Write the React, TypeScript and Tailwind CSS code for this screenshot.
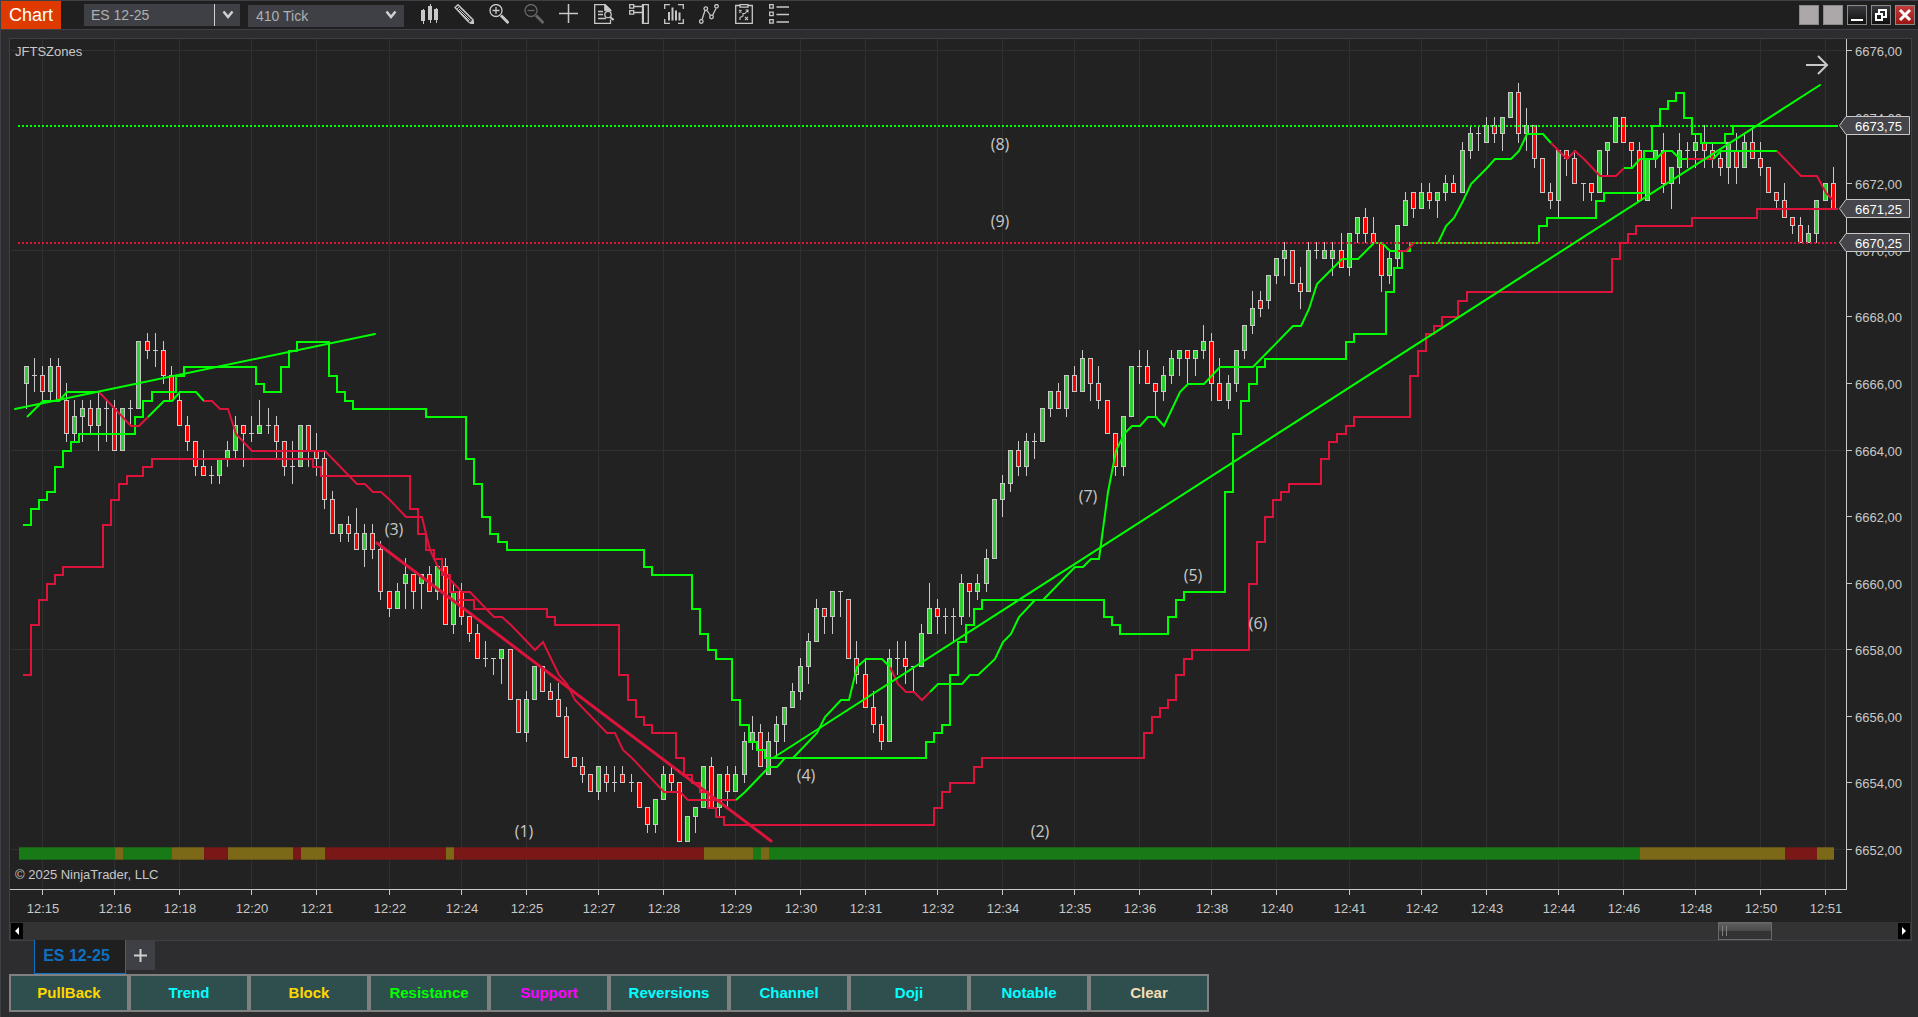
import type { ReactNode } from 'react'

// All chart levels are counted in ticks (0.25) below this price.
const TOP_PRICE = 6676

type Candle = [high: number, top: number, bottom: number, low: number, up: 0 | 1]
type Point = [bar: number, level: number]

const candles: Candle[] = [
  [38, 38, 40, 43, 1], [37, 39, 39, 41, 1], [38, 39, 41, 42, 0], [37, 38, 41, 42, 1], [37, 38, 42, 42, 0],
  [40, 42, 46, 47, 0], [42, 44, 46, 47, 1], [42, 43, 44, 47, 1], [42, 43, 45, 46, 0], [41, 43, 45, 48, 1],
  [42, 43, 43, 47, 1], [42, 43, 48, 48, 0], [43, 43, 48, 48, 1], [42, 43, 43, 45, 1], [35, 35, 43, 43, 1],
  [34, 35, 36, 37, 0], [34, 36, 36, 38, 1], [35, 36, 39, 40, 0], [38, 39, 42, 42, 0], [41, 42, 45, 45, 0],
  [44, 45, 47, 48, 0], [47, 47, 50, 51, 0], [48, 50, 51, 51, 0], [50, 51, 51, 52, 1], [49, 49, 51, 52, 1],
  [47, 48, 49, 50, 1], [44, 45, 48, 49, 1], [45, 45, 46, 50, 0], [44, 46, 46, 47, 1], [42, 45, 46, 46, 1],
  [43, 45, 45, 46, 1], [44, 45, 47, 49, 0], [47, 47, 50, 51, 0], [47, 50, 50, 52, 1], [45, 45, 50, 50, 1],
  [45, 45, 48, 50, 0], [46, 48, 49, 51, 0], [48, 49, 54, 55, 0], [53, 54, 58, 58, 0], [57, 57, 58, 59, 1],
  [56, 57, 58, 59, 0], [55, 58, 60, 60, 0], [57, 58, 60, 62, 1], [57, 58, 60, 61, 0], [59, 60, 65, 66, 0],
  [65, 65, 67, 68, 0], [64, 65, 67, 67, 1], [61, 63, 64, 67, 1], [63, 63, 65, 67, 0], [63, 63, 64, 67, 1],
  [62, 63, 65, 65, 0], [62, 62, 65, 66, 1], [61, 62, 69, 69, 0], [64, 65, 69, 70, 1], [64, 65, 68, 69, 0],
  [68, 68, 70, 71, 0], [69, 70, 73, 73, 0], [71, 73, 73, 74, 1], [73, 73, 73, 75, 1], [72, 72, 73, 76, 1],
  [72, 72, 78, 78, 0], [78, 78, 82, 82, 0], [77, 78, 82, 83, 1], [74, 74, 78, 78, 1], [74, 74, 77, 77, 0],
  [76, 77, 78, 78, 0], [76, 78, 80, 80, 0], [79, 80, 85, 85, 0], [85, 85, 86, 86, 0], [85, 86, 87, 88, 0],
  [87, 87, 89, 89, 0], [86, 86, 89, 90, 1], [86, 87, 88, 89, 0], [86, 88, 88, 89, 1], [86, 87, 88, 88, 0],
  [87, 88, 88, 89, 1], [88, 88, 91, 91, 0], [91, 91, 93, 94, 0], [90, 90, 93, 94, 1], [86, 87, 90, 90, 1],
  [86, 87, 88, 89, 0], [88, 88, 95, 95, 0], [92, 92, 95, 95, 1], [91, 91, 92, 94, 1], [86, 86, 91, 91, 1],
  [85, 86, 91, 91, 0], [87, 87, 91, 92, 1], [86, 87, 89, 91, 0], [86, 87, 89, 89, 1], [82, 83, 87, 88, 1],
  [80, 82, 83, 84, 1], [81, 82, 86, 86, 0], [82, 83, 87, 87, 1], [80, 81, 83, 85, 1], [79, 79, 81, 83, 1],
  [76, 77, 79, 79, 1], [73, 74, 77, 78, 1], [70, 71, 74, 76, 1], [66, 67, 71, 71, 1], [67, 67, 68, 70, 0],
  [65, 65, 68, 70, 1], [65, 65, 65, 68, 1], [66, 66, 73, 73, 0], [71, 73, 75, 76, 0], [73, 75, 79, 79, 0],
  [77, 79, 81, 82, 0], [80, 81, 83, 84, 0], [72, 73, 83, 83, 1], [71, 73, 73, 75, 1], [71, 73, 74, 76, 0],
  [74, 74, 74, 77, 1], [69, 70, 74, 74, 1], [64, 67, 70, 70, 1], [66, 67, 68, 70, 0], [67, 68, 68, 70, 1],
  [67, 68, 68, 71, 1], [63, 64, 68, 69, 1], [64, 64, 65, 68, 0], [63, 64, 65, 66, 1], [60, 61, 64, 65, 1],
  [54, 54, 61, 61, 1], [51, 52, 54, 56, 1], [48, 48, 52, 53, 1], [47, 48, 50, 51, 0], [46, 47, 50, 51, 1],
  [46, 47, 47, 49, 1], [43, 43, 47, 47, 1], [41, 41, 43, 44, 1], [40, 41, 43, 43, 0], [39, 39, 43, 44, 1],
  [38, 39, 41, 41, 0], [36, 37, 41, 41, 1], [37, 37, 40, 42, 0], [38, 40, 42, 43, 0], [42, 42, 46, 46, 0],
  [46, 46, 50, 51, 0], [44, 44, 50, 51, 1], [38, 38, 44, 44, 1], [36, 38, 38, 40, 1], [36, 38, 40, 40, 0],
  [40, 40, 41, 44, 0], [38, 39, 41, 42, 1], [36, 37, 39, 40, 1], [36, 36, 37, 39, 1], [36, 36, 37, 40, 0],
  [36, 36, 37, 39, 1], [33, 35, 36, 37, 1], [34, 35, 40, 42, 0], [37, 40, 42, 42, 0], [39, 40, 42, 43, 1],
  [36, 36, 40, 41, 1], [33, 33, 36, 37, 1], [29, 31, 33, 34, 1], [29, 30, 31, 32, 0], [27, 27, 30, 31, 1],
  [25, 25, 27, 28, 1], [23, 24, 25, 27, 1], [24, 24, 28, 28, 0], [26, 28, 29, 31, 0], [23, 24, 29, 29, 1],
  [23, 24, 24, 25, 1], [23, 24, 25, 25, 1], [23, 24, 25, 27, 1], [22, 24, 26, 26, 0], [22, 22, 26, 27, 1],
  [20, 20, 22, 23, 1], [19, 20, 22, 23, 0], [20, 22, 23, 23, 0], [23, 23, 27, 29, 0], [24, 25, 27, 28, 1],
  [21, 21, 25, 26, 1], [17, 18, 21, 21, 1], [17, 17, 19, 20, 0], [16, 17, 19, 19, 1], [16, 17, 18, 19, 0],
  [17, 17, 18, 20, 1], [15, 16, 17, 18, 1], [15, 16, 17, 17, 0], [11, 12, 17, 17, 1], [9, 10, 12, 13, 1],
  [9, 10, 10, 12, 1], [8, 9, 11, 11, 1], [8, 9, 10, 11, 0], [8, 8, 10, 12, 1], [5, 5, 8, 8, 1],
  [4, 5, 10, 11, 0], [7, 9, 10, 12, 1], [9, 9, 13, 14, 0], [13, 13, 17, 17, 0], [16, 17, 18, 19, 0],
  [12, 12, 18, 20, 1], [12, 12, 13, 15, 0], [12, 13, 16, 16, 0], [16, 16, 16, 18, 1], [16, 16, 17, 18, 0],
  [12, 12, 17, 17, 1], [11, 11, 12, 15, 1], [8, 8, 11, 11, 1], [8, 8, 11, 11, 0], [11, 11, 12, 14, 0],
  [11, 12, 18, 18, 0], [13, 13, 18, 18, 1], [12, 12, 13, 14, 1], [10, 12, 16, 17, 0], [14, 14, 16, 19, 1],
  [10, 12, 14, 16, 1], [11, 12, 12, 14, 1], [10, 11, 12, 14, 1], [9, 11, 12, 14, 0], [11, 12, 13, 14, 0],
  [12, 13, 14, 15, 0], [11, 11, 14, 16, 1], [10, 12, 14, 16, 0], [10, 11, 14, 14, 1], [9, 11, 13, 13, 0],
  [11, 13, 14, 15, 0], [14, 14, 17, 17, 0], [17, 17, 18, 19, 0], [16, 18, 20, 20, 0], [20, 20, 21, 22, 0],
  [20, 21, 23, 23, 0], [21, 22, 23, 23, 1], [18, 18, 22, 23, 1], [16, 16, 18, 18, 1], [14, 16, 19, 19, 0],
]

const upperZone: Point[] = [
  [0, 57], [1, 55], [2, 54], [3, 53], [4, 50], [5, 48], [6, 47], [7, 46], [14, 44], [15, 42], [16, 41], [19, 39],
  [20, 38], [29, 40], [30, 41], [32, 38], [33, 36], [34, 35], [38, 39], [39, 41], [40, 42], [41, 43], [50, 44],
  [55, 49], [56, 52], [57, 56], [58, 58], [59, 59], [60, 60], [77, 62], [78, 63], [83, 67], [84, 70], [85, 72],
  [86, 73], [88, 78], [89, 81], [90, 83], [91, 84], [92, 85], [112, 83], [113, 82], [114, 81], [115, 75],
  [116, 71], [117, 69], [118, 67], [119, 66], [134, 68], [135, 69], [136, 70], [142, 68], [143, 66], [144, 65],
  [149, 53], [150, 46], [151, 42], [152, 40], [153, 38], [154, 37], [164, 35], [165, 34], [169, 29], [170, 26],
  [171, 24], [172, 23], [188, 21], [189, 20], [195, 18], [196, 17], [201, 12], [202, 9], [203, 7], [204, 6],
  [205, 5], [206, 8], [207, 10], [208, 11], [211, 10], [212, 9],
]

const lowerZone: Point[] = [
  [0, 75], [1, 69], [2, 66], [3, 64], [4, 63], [5, 62], [10, 57], [11, 54], [12, 52], [13, 51], [15, 50], [16, 49],
  [36, 50], [37, 51], [48, 55], [49, 58], [50, 60], [51, 61], [52, 63], [53, 65], [54, 66], [56, 67], [65, 68],
  [66, 69], [74, 75], [75, 78], [76, 80], [77, 81], [78, 82], [81, 85], [82, 87], [83, 88], [84, 89], [85, 91],
  [86, 92], [87, 93], [113, 91], [114, 89], [115, 88], [118, 86], [119, 85], [139, 82], [140, 80], [141, 79],
  [142, 78], [143, 75], [144, 73], [145, 72], [152, 64], [153, 59], [154, 56], [155, 54], [156, 53], [157, 52],
  [161, 49], [162, 47], [163, 46], [164, 45], [165, 44], [172, 39], [173, 36], [174, 34], [175, 33], [176, 32],
  [178, 30], [179, 29], [197, 25], [198, 23], [199, 22], [200, 21], [207, 20], [215, 19],
]

const LIME = '#00ff00'
const CRIMSON = '#dc143c'
const INK = '#c8c8c8'

const average: { color: string; points: Point[] }[] = [
  { color: LIME, points: [[0, 44], [2, 42], [4, 42], [5, 41], [9, 41]] },
  { color: CRIMSON, points: [[9, 41], [13, 45], [14, 45], [15, 44]] },
  { color: LIME, points: [[15, 44], [17, 42], [18, 42], [19, 41], [21, 41], [22, 42]] },
  {
    color: CRIMSON,
    points: [
      [22, 42], [23, 42], [24, 43], [25, 43], [26, 46], [28, 48], [37, 48], [41, 52], [42, 52], [43, 53], [44, 53],
      [45, 54], [47, 56], [49, 56], [50, 60], [51, 62], [54, 65], [55, 65], [58, 68], [59, 68], [60, 69], [63, 72],
      [64, 71], [66, 75], [67, 76], [68, 78], [72, 82], [73, 82], [74, 84], [75, 85], [79, 89], [81, 89], [82, 90],
      [88, 90],
    ],
  },
  {
    color: LIME,
    points: [
      [88, 90], [89, 89], [92, 86], [93, 86], [94, 85], [95, 85], [98, 82], [99, 80], [101, 78], [102, 78],
      [103, 74], [104, 73], [106, 73], [107, 74],
    ],
  },
  { color: CRIMSON, points: [[107, 74], [108, 76], [109, 77], [110, 77], [111, 78], [112, 77]] },
  {
    color: LIME,
    points: [
      [112, 77], [113, 76], [116, 76], [117, 75], [118, 75], [120, 73], [121, 71], [122, 70], [123, 68], [125, 66],
      [126, 66], [130, 62], [131, 62], [132, 61], [133, 61], [134, 53], [135, 48], [136, 46], [137, 45], [138, 45],
      [139, 44], [140, 44], [141, 45], [143, 41], [144, 40], [146, 40], [148, 38], [152, 38], [157, 33], [158, 33],
      [159, 31], [160, 28], [161, 27], [163, 25], [165, 25], [167, 23], [168, 23], [169, 24], [170, 24],
    ],
  },
  { color: CRIMSON, points: [[170, 24], [171, 24], [172, 23]] },
  {
    color: LIME,
    points: [
      [172, 23], [175, 23], [176, 21], [177, 20], [178, 18], [179, 16], [181, 14], [182, 13], [184, 13], [185, 12],
      [186, 10], [188, 10], [189, 11],
    ],
  },
  { color: CRIMSON, points: [[189, 11], [191, 13], [192, 12], [193, 13], [195, 15], [197, 15], [198, 14]] },
  {
    color: LIME,
    points: [[198, 14], [199, 14], [200, 13], [202, 13], [203, 12], [204, 12], [205, 13], [206, 13]],
  },
  { color: CRIMSON, points: [[206, 13], [209, 13]] },
  { color: LIME, points: [[209, 13], [210, 12], [217, 12]] },
  { color: CRIMSON, points: [[217, 12], [220, 15], [222, 15], [223, 17], [224, 18]] },
]

const times: [bar: number, label: string][] = [
  [2, '12:15'], [11, '12:16'], [19, '12:18'], [28, '12:20'], [36, '12:21'], [45, '12:22'], [54, '12:24'],
  [62, '12:25'], [71, '12:27'], [79, '12:28'], [88, '12:29'], [96, '12:30'], [104, '12:31'], [113, '12:32'],
  [121, '12:34'], [130, '12:35'], [138, '12:36'], [147, '12:38'], [155, '12:40'], [164, '12:41'], [173, '12:42'],
  [181, '12:43'], [190, '12:44'], [198, '12:46'], [207, '12:48'], [215, '12:50'], [223, '12:51'],
]

const UP = '#177b17'
const FLAT = '#7c6a17'
const DOWN = '#7b1717'

const trendBand: [from: number, to: number, color: string][] = [
  [19, 115, UP], [115, 123, FLAT], [123, 172, UP], [172, 204, FLAT], [204, 228, DOWN], [228, 293, FLAT],
  [293, 301, DOWN], [301, 325, FLAT], [325, 446, DOWN], [446, 454, FLAT], [454, 704, DOWN], [704, 753, FLAT],
  [753, 761, UP], [761, 769, FLAT], [769, 1640, UP], [1640, 1785, FLAT], [1785, 1817, DOWN], [1817, 1834, FLAT],
]

const notes: [x: number, y: number, text: string][] = [
  [524, 832, '(1)'], [1040, 832, '(2)'], [394, 530, '(3)'], [806, 776, '(4)'], [1193, 576, '(5)'],
  [1258, 624, '(6)'], [1088, 497, '(7)'], [1000, 145, '(8)'], [1000, 222, '(9)'],
]

const actions = [
  { label: 'PullBack', color: 'text-[#ffd700]' },
  { label: 'Trend', color: 'text-[#00ffff]' },
  { label: 'Block', color: 'text-[#ffd700]' },
  { label: 'Resistance', color: 'text-[#00ff00]' },
  { label: 'Support', color: 'text-[#ff00ff]' },
  { label: 'Reversions', color: 'text-[#00ffff]' },
  { label: 'Channel', color: 'text-[#00ffff]' },
  { label: 'Doji', color: 'text-[#00ffff]' },
  { label: 'Notable', color: 'text-[#00ffff]' },
  { label: 'Clear', color: 'text-[#f5deb3]' },
]

const barX = (bar: number) => Math.floor(26 + bar * 8.0675)
const edgeX = (bar: number) => Math.floor(26 + (bar - 0.5) * 8.0675) + 1
const levelY = (level: number) => Math.floor(50.7 + level * 8.32)

function stepPath(points: Point[], endX: number): string {
  let d = `M23 ${levelY(points[0][1]) + 1}`
  for (const [bar, level] of points.slice(1)) {
    d += `H${edgeX(bar)}V${levelY(level) + 1}`
  }
  return `${d}H${endX}`
}

function linePath(points: Point[]): string {
  return 'M' + points.map(([bar, level]) => `${barX(bar) + 1} ${levelY(level) + 1}`).join('L')
}

function formatPrice(price: number): string {
  return price.toFixed(2).replace('.', ',')
}

function CandleShape({ bar, candle }: { bar: number; candle: Candle }) {
  const [high, top, bottom, low, up] = candle
  const x = barX(bar)
  const y = levelY(top)
  const h = levelY(bottom) - y + 1
  return (
    <g>
      <rect x={x} y={levelY(high)} width={1} height={levelY(low) - levelY(high) + 1} fill={INK} />
      <rect x={x - 2} y={y} width={5} height={h} fill={INK} />
      {h > 2 && <rect x={x - 1} y={y + 1} width={3} height={h - 2} fill={up ? '#32cd32' : '#ff0000'} />}
    </g>
  )
}

function PriceTag({ y, price }: { y: number; price: number }) {
  return (
    <g>
      <path
        d={`M1839.5 ${y - 0.5}L1846 ${y - 9.5}H1909.5V${y + 8.5}H1846Z`}
        fill="#45454b"
        stroke={INK}
        shapeRendering="auto"
      />
      <text x={1855} y={y + 5} fill="#ffffff">
        {formatPrice(price)}
      </text>
    </g>
  )
}

function PriceChart() {
  const prices = Array.from({ length: 13 }, (_, i) => TOP_PRICE - i * 2)
  return (
    <svg
      viewBox="10 39 1901 883"
      className="block h-auto w-full bg-[#222222] font-['Liberation_Sans',Arial,sans-serif] text-[13px]"
      shapeRendering="crispEdges"
      role="img"
      aria-label="ES 12-25, 410 tick price chart"
    >
      <g fill="#303030">
        {[0, 24, 48, 72, 96].map((level) => (
          <rect key={level} x={11} y={levelY(level)} width={1835} height={1} />
        ))}
        {times.map(([bar]) => (
          <rect key={bar} x={barX(bar)} y={39} width={1} height={848} />
        ))}
      </g>

      {trendBand.map(([from, to, color]) => (
        <g key={from} fill={color}>
          <rect x={from} y={847} width={to - from} height={13} opacity={0.7} />
          <rect x={from} y={848} width={to - from} height={11} opacity={0.94} />
        </g>
      ))}

      {candles.map((candle, bar) => (
        <CandleShape key={bar} bar={bar} candle={candle} />
      ))}

      <g fill="none" strokeWidth={2}>
        <path d={stepPath(lowerZone, 1838)} stroke={CRIMSON} />
        <path d={stepPath(upperZone, 1838)} stroke={LIME} />
        {average.map(({ color, points }) => (
          <path key={points[0][0]} d={linePath(points)} stroke={color} shapeRendering="auto" />
        ))}
        <path d="M18 126H1838" stroke={LIME} strokeDasharray="2 2" />
        <path d="M18 243H1838" stroke={CRIMSON} strokeDasharray="2 2" />
        <g shapeRendering="auto" strokeLinecap="round">
          <path d="M15 409L375 334" stroke={LIME} />
          <path d="M773 758L1820 85" stroke={LIME} />
          <path d="M377 543L771 841" stroke={CRIMSON} strokeWidth={3} />
        </g>
      </g>

      <g fill={INK} className="font-['Open_Sans','Noto_Sans',sans-serif] text-base" textAnchor="middle">
        {notes.map(([x, y, text]) => (
          <text key={text} x={x} y={y + 5}>
            {text}
          </text>
        ))}
      </g>

      <path d="M1806 65H1826M1818 56L1827 65L1818 74" fill="none" stroke={INK} strokeWidth={2} shapeRendering="auto" />

      <g fill={INK}>
        <text x={15} y={56}>JFTSZones</text>
        <text x={15} y={879}>© 2025 NinjaTrader, LLC</text>
        <rect x={10} y={889} width={1837} height={1} />
        <rect x={1846} y={39} width={1} height={851} />
        {prices.map((price, i) => (
          <g key={price}>
            <rect x={1847} y={levelY(i * 8)} width={5} height={1} />
            <text x={1855} y={levelY(i * 8) + 6}>
              {formatPrice(price)}
            </text>
          </g>
        ))}
        {times.map(([bar, label]) => (
          <g key={bar}>
            <rect x={barX(bar)} y={890} width={1} height={5} />
            <text x={barX(bar) + 1} y={913} textAnchor="middle">
              {label}
            </text>
          </g>
        ))}
      </g>

      <PriceTag y={126} price={6673.75} />
      <PriceTag y={209} price={6671.25} />
      <PriceTag y={243} price={6670.25} />
    </svg>
  )
}

function ToolButton({ label, children, disabled }: { label: string; children: ReactNode; disabled?: boolean }) {
  return (
    <button type="button" aria-label={label} disabled={disabled} className="size-5 text-[#c8c8c8] disabled:text-[#666666]">
      <svg viewBox="0 0 20 20" className="size-5" fill="none" stroke="currentColor" strokeWidth={1.3}>
        {children}
      </svg>
    </button>
  )
}

function Toolbar() {
  return (
    <div className="flex items-center gap-[15px]">
      <ToolButton label="Chart style">
        <g fill="currentColor" stroke="none" shapeRendering="crispEdges">
          <path d="M2 6h4v11h-4zM4 5h1v15h-1zM9 2h4v14h-4zM11 0h1v19h-1zM15 5h4v11h-4zM17 4h1v15h-1z" />
        </g>
      </ToolButton>
      <ToolButton label="Drawing tools">
        <path d="M1 3.500L4 .7L18 14.500L19.500 19.500L14.500 18Z" />
        <path d="M3 5L6 2.200M5 5L16.500 16.500M6.500 4L17.500 15M4 6L15 17" strokeWidth={1} />
        <path d="M16.500 19L19.500 19.500L19 16Z" fill="currentColor" />
      </ToolButton>
      <ToolButton label="Zoom in">
        <circle cx={7} cy={6.500} r={6} />
        <path d="M3.500 6.500h7M7 3v7" />
        <path d="M12 11.500L19.500 19" strokeWidth={3} />
      </ToolButton>
      <ToolButton label="Zoom out" disabled>
        <circle cx={7} cy={6.500} r={6} />
        <path d="M3.500 6.500h7" />
        <path d="M12 11.500L19.500 19" strokeWidth={3} />
      </ToolButton>
      <ToolButton label="Cross hair">
        <path d="M0 9.500h19M9.500 0v19" strokeWidth={1.500} />
      </ToolButton>
      <ToolButton label="Data box">
        <path d="M16.500 15.500V19.300H.7V.7H11L16.500 6V7.500M11 .7V6h5" />
        <path d="M11 .7V6h5.500z" fill="currentColor" />
        <path d="M4 7.500h5M4 10.500h5M4 14.500h8" />
        <circle cx={14} cy={10.500} r={3.200} />
        <path d="M16 13L19.500 16" strokeWidth={2} />
      </ToolButton>
      <ToolButton label="Chart trader">
        <path d="M.7.7h4v3.500h-4zM.7 6.700h4v3.500h-4zM5 2.500h8M5 8.500h8M13.500.7h5.800v18.600h-5.800z" />
        <path d="M14 1v18" strokeWidth={2} />
      </ToolButton>
      <ToolButton label="Data series">
        <path d="M6 .7H.7V5M14 .7h5.300V5M6 19.300H.7V15M14 19.300h5.300V15" />
        <path d="M5 8v8.500M8.500 3.500v13M12 6.500v10M15.500 8.500v8" strokeWidth={2} />
      </ToolButton>
      <ToolButton label="Indicators">
        <path d="M3 15.500L6 6.500M8 6.500L11.500 11.500M13.500 11.500L17 4.500" />
        <circle cx={2.300} cy={17.500} r={1.800} />
        <circle cx={6.800} cy={4.700} r={1.800} />
        <circle cx={12.500} cy={13} r={1.800} />
        <circle cx={17.500} cy={2.300} r={1.800} />
      </ToolButton>
      <ToolButton label="Strategies">
        <path d="M5.500 1.500H1.700V19.300H18.300V1.500H14.500M6 .7h8v2.500h-8z" />
        <path d="M5 6l2.500 2.500M7.500 6L5 8.500M11 13l3 3M14 13l-3 3M6 16v-2.500l3-1.500V9.500h2l2.500-3M11.500 6h2.500v2.500" strokeWidth={1.100} />
      </ToolButton>
      <ToolButton label="Properties">
        <path d="M.7.7h3.500v3.500h-3.500zM.7 8.200h3.500v3.500h-3.500zM.7 15.700h3.500v3.500h-3.500z" />
        <path d="M7.500 3H20M7.500 10.500H20M7.500 18H20" strokeWidth={1.500} />
      </ToolButton>
    </div>
  )
}

function Chevron() {
  return (
    <svg viewBox="0 0 12 10" className="pointer-events-none h-2.5 w-3" fill="none" stroke="#d0d0d0" strokeWidth={2.500}>
      <path d="M1.500 1.500L6 7L10.500 1.500" />
    </svg>
  )
}

const winButton = 'flex size-5 items-center justify-center border border-[#8a8a8a]'

function TitleBar() {
  return (
    <header className="flex h-[30px] items-center border-y border-[#3f3f46] bg-[#1f1f1f]">
      <h1 className="flex h-7 w-[60px] items-center justify-center bg-[#de3a00] text-lg text-white">Chart</h1>

      <div className="ml-[23px] flex h-[22px] w-[156px] bg-[#3f3f46]">
        <input
          type="text"
          aria-label="Instrument"
          defaultValue="ES 12-25"
          className="w-0 flex-1 bg-transparent pl-[7px] text-sm text-[#b0b0b0] outline-none"
        />
        <button
          type="button"
          aria-label="Choose instrument"
          className="flex w-[26px] items-center justify-center border-l border-[#d0d0d0]"
        >
          <Chevron />
        </button>
      </div>

      <div className="relative ml-2 h-[22px] w-[156px]">
        <select
          aria-label="Interval"
          className="h-full w-full appearance-none bg-[#3f3f46] pl-2 text-sm text-[#b0b0b0] outline-none"
        >
          <option>410 Tick</option>
        </select>
        <span className="pointer-events-none absolute inset-y-0 right-[7px] flex items-center">
          <Chevron />
        </span>
      </div>

      <div className="ml-[15px] pb-0.5">
        <Toolbar />
      </div>

      <div className="mr-[3px] ml-auto flex gap-1">
        <button type="button" aria-label="Link instrument" className={`${winButton} bg-[#aca8a9]`} />
        <button type="button" aria-label="Link interval" className={`${winButton} bg-[#aca8a9]`} />
        <button type="button" aria-label="Minimize" className={`${winButton} bg-linear-to-b from-[#3a3a3e] to-[#101010]`}>
          <svg viewBox="0 0 18 18" className="size-[18px]">
            <path d="M3 13h12v2h-12z" fill="#fff" />
          </svg>
        </button>
        <button type="button" aria-label="Restore" className={`${winButton} bg-linear-to-b from-[#3a3a3e] to-[#101010]`}>
          <svg viewBox="0 0 18 18" className="size-[18px]" fill="none" stroke="#fff" strokeWidth={2}>
            <path d="M7 4h7v7h-3M4 8h6v6H4zM7 3v5" />
          </svg>
        </button>
        <button type="button" aria-label="Close" className={`${winButton} bg-linear-to-b from-[#c23a3a] to-[#9c1515]`}>
          <svg viewBox="0 0 18 18" className="size-[18px]" stroke="#fff" strokeWidth={3}>
            <path d="M4 4L14 14M14 4L4 14" />
          </svg>
        </button>
      </div>
    </header>
  )
}

function TimeScroll() {
  return (
    <div className="flex h-[18px] items-center bg-[#333333] px-px">
      <button type="button" aria-label="Scroll left" className="flex h-4 w-3 items-center justify-center bg-black">
        <svg viewBox="0 0 4 8" className="h-2 w-1">
          <path d="M4 0V8L0 4Z" fill="#fff" />
        </svg>
      </button>
      <div className="mr-[126px] ml-auto flex h-[18px] w-[54px] items-center gap-[3px] border border-[#6a6a6a] bg-linear-to-b from-[#606060] from-0% via-[#4a4a4a] via-50% to-[#333333] to-50% pl-[3px]">
        <span className="h-2.5 w-px bg-[#808080]" />
        <span className="h-2.5 w-px bg-[#808080]" />
      </div>
      <button type="button" aria-label="Scroll right" className="flex h-4 w-3 items-center justify-center bg-black">
        <svg viewBox="0 0 4 8" className="h-2 w-1">
          <path d="M0 0V8L4 4Z" fill="#fff" />
        </svg>
      </button>
    </div>
  )
}

export default function App() {
  return (
    <div className="min-h-screen border-l border-[#3f3f46] bg-[#2d2d30] font-['Liberation_Sans',Arial,sans-serif]">
      <TitleBar />

      <main className="mt-2 mr-[6px] ml-2">
        <section className="border border-[#3f3f46]">
          <PriceChart />
          <TimeScroll />
        </section>

        <nav className="flex items-start pl-[25px]">
          <button
            type="button"
            className="-mt-px h-[34px] w-[92px] border-x border-b border-[#0e70c0] bg-[#1f1f1f] pr-[7px] pb-0.5 text-base font-bold whitespace-nowrap text-[#0e70c0]"
          >
            ES 12-25
          </button>
          <button
            type="button"
            aria-label="Add tab"
            className="flex h-[29px] w-[29px] items-center justify-center bg-[#3f3f46]"
          >
            <svg viewBox="0 0 13 13" className="size-[13px]">
              <path d="M0 6.500H13M6.500 0V13" stroke="#d0d0d0" strokeWidth={2} />
            </svg>
          </button>
        </nav>

        <div className="flex">
          {actions.map(({ label, color }) => (
            <button
              key={label}
              type="button"
              className={`h-[38px] w-[120px] border-2 border-[#808080] bg-[#2f4f4f] text-[15px] font-bold ${color}`}
            >
              {label}
            </button>
          ))}
        </div>
      </main>
    </div>
  )
}
